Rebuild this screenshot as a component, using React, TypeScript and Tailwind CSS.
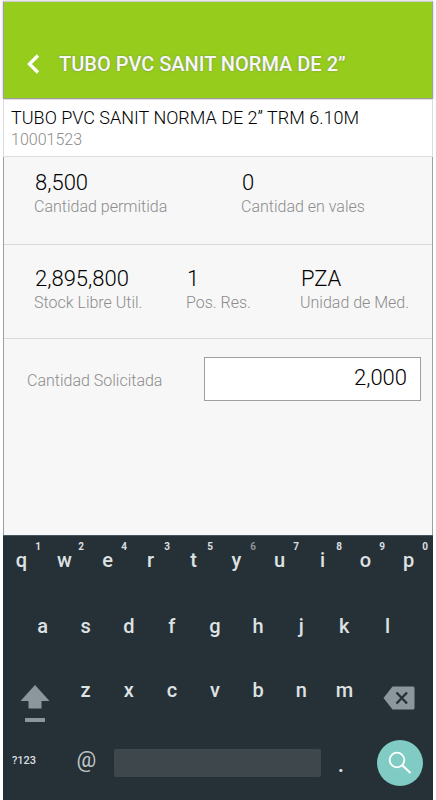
import { useState } from "react";

const numberRow = [
	{ key: "q", hint: "1" },
	{ key: "w", hint: "2" },
	{ key: "e", hint: "4" },
	{ key: "r", hint: "3" },
	{ key: "t", hint: "5" },
	{ key: "y", hint: "6", muted: true },
	{ key: "u", hint: "7" },
	{ key: "i", hint: "8" },
	{ key: "o", hint: "9" },
	{ key: "p", hint: "0" },
];

const homeRow = ["a", "s", "d", "f", "g", "h", "j", "k", "l"];
const bottomRow = ["z", "x", "c", "v", "b", "n", "m"];

interface StatProps {
	value: string;
	label: string;
	className: string;
}

function Stat({ value, label, className }: StatProps)
{
	return (
		<div className={ className }>
			<dd className="pl-px text-[22px] leading-6 text-black">{ value }</dd>
			<dt className="text-base leading-6 text-[#8c8c8c]">{ label }</dt>
		</div>
	)
}

interface KeyProps {
	label: string;
	hint?: string;
	muted?: boolean;
}

function Key({ label, hint, muted }: KeyProps)
{
	return (
		<button type="button" className="relative h-12 flex-1 pr-[6px] text-center text-xl leading-none font-medium text-[#dfe2e3]">
			{ label }
			{ hint && (
				<span className={ `absolute top-[6px] right-[5px] text-[10px] leading-none font-bold ${ muted ? "text-[#8e9496]" : "text-[#dcdfe0]" }` }>
					{ hint }
				</span>
			) }
		</button>
	)
}

function Keyboard()
{
	return (
		<div className="flex flex-col border-t border-[#4a565c] bg-[#263137] font-normal">
			<div className="flex">
				{ numberRow.map( item => <Key key={ item.key } label={ item.key } hint={ item.hint } muted={ item.muted } /> ) }
			</div>
			<div className="mt-[18px] flex px-[21px]">
				{ homeRow.map( item => <Key key={ item } label={ item } /> ) }
			</div>
			<div className="mt-4 flex">
				<button type="button" aria-label="Shift" className="flex h-16 w-16 items-center justify-center pt-3">
					<svg width="30" height="38" viewBox="0 0 30 38" fill="#8b979c">
						<path d="M15 0 29.500 16H21.500V23.500H8.500V16H.5Z" />
						<path d="M5 33H25V37H5Z" />
					</svg>
				</button>
				{ bottomRow.map( item => <Key key={ item } label={ item } /> ) }
				<button type="button" aria-label="Borrar" className="flex h-16 w-16 items-center justify-center pr-1">
					<svg width="32" height="24" viewBox="0 0 32 24">
						<path d="M9.500 .5H30Q31.500 .5 31.500 2V22Q31.500 23.500 30 23.500H9.500L.5 12Z" fill="#8b979c" />
						<path d="M13.500 6.500 24 17.500M24 6.500 13.500 17.500" fill="none" stroke="#263137" strokeWidth="2.400" />
					</svg>
				</button>
			</div>
			<div className="flex h-[70px] items-center pr-[10px] pb-1">
				<button type="button" className="w-[42px] pb-[6px] text-[11px] leading-none font-medium text-[#dcdfe0]">?123</button>
				<button type="button" className="ml-5 w-[43px] pb-[6px] text-[22px] leading-none text-[#bfc4c6]">@</button>
				<button type="button" aria-label="Espacio" className="ml-[6px] h-7 flex-1 rounded-xs bg-[#3d474c]" />
				<button type="button" className="w-10 text-[28px] leading-none text-[#e4e6e7]">.</button>
				<button type="button" aria-label="Buscar" className="ml-4 flex size-[46px] items-center justify-center rounded-full bg-[#80cbc4]">
					<svg width="24" height="24" viewBox="0 0 24 24" fill="none" stroke="white" strokeWidth="1.800">
						<circle cx="9" cy="9" r="7.300" />
						<path d="M14.200 14.200 22.500 22" strokeWidth="2.200" />
					</svg>
				</button>
			</div>
		</div>
	)
}

export default function App()
{
	const [amount, setAmount] = useState("2,000");

	return (
		<div className="flex min-h-screen flex-col bg-white px-[3px] pt-px font-['Roboto',sans-serif] font-light">
			<header className="flex h-[98px] items-center border border-[#9f9f9f] border-t-[#cfcfcf] bg-[#96cc1b] pt-7 pl-5 shadow-[0_0_3px_rgba(0,0,0,0.25)]">
				<button type="button" aria-label="Regresar" className="w-[35px]">
					<svg width="18" height="20" viewBox="0 0 18 20" fill="none" stroke="white" strokeWidth="3.400">
						<path d="M14 1.500 5.500 10 14 18.500" />
					</svg>
				</button>
				<h1 className="text-xl leading-6 font-medium text-[#f7f7f7] [text-shadow:0_0_2px_rgba(110,110,130,0.7)]">TUBO PVC SANIT NORMA DE 2”</h1>
			</header>
			<main className="flex grow flex-col bg-[#f7f7f7]">
				<div className="border border-[#dcdcdc] bg-white px-[7px] pt-[6px] pb-[6px]">
					<p className="text-lg leading-6 text-black">TUBO PVC SANIT NORMA DE 2” TRM 6.10M</p>
					<p className="text-base leading-5 text-[#8c8c8c]">10001523</p>
				</div>
				<div className="flex grow flex-col border-x border-[#9f9f9f]">
					<dl className="flex h-[88px] border-b border-[#d8d8d8] pt-[14px] pl-[30px]">
						<Stat value="8,500" label="Cantidad permitida" className="w-[207px]" />
						<Stat value="0" label="Cantidad en vales" className="flex-1" />
					</dl>
					<dl className="flex h-[94px] border-b border-[#d8d8d8] pt-[22px] pl-[30px]">
						<Stat value="2,895,800" label="Stock Libre Util." className="w-[152px]" />
						<Stat value="1" label="Pos. Res." className="w-[114px]" />
						<Stat value="PZA" label="Unidad de Med." className="flex-1" />
					</dl>
					<div className="flex items-center pt-[18px] pr-[11px] pl-[23px]">
						<label htmlFor="cantidad" className="w-[177px] pt-1 text-base leading-6 text-[#8c8c8c]">Cantidad Solicitada</label>
						<input
							id="cantidad"
							value={ amount }
							onChange={ e => setAmount( e.target.value ) }
							className="h-11 min-w-0 flex-1 border border-[#9f9f9f] bg-white pr-[13px] pb-1 text-right text-[22px] text-black outline-none"
						/>
					</div>
				</div>
			</main>
			<Keyboard />
		</div>
	)
}
